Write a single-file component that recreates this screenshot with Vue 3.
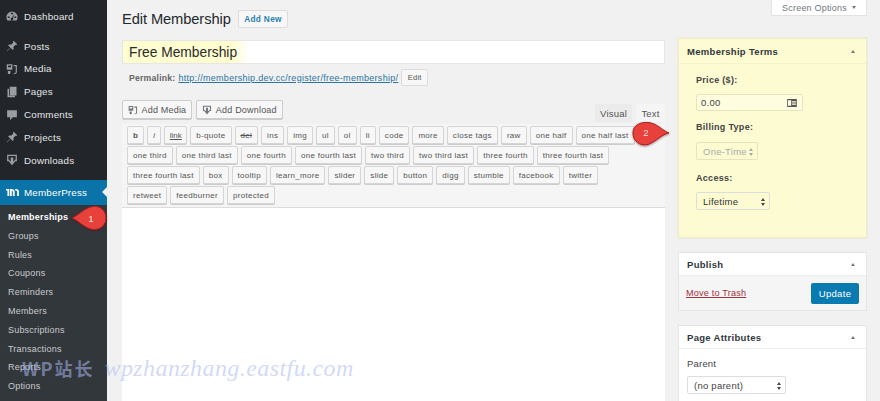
<script setup>
const menu = [
  { label: 'Posts', icon: 'pin' },
  { label: 'Media', icon: 'media' },
  { label: 'Pages', icon: 'pages' },
  { label: 'Comments', icon: 'comment' },
  { label: 'Projects', icon: 'pin' },
  { label: 'Downloads', icon: 'download' }
]
const sub = ['Groups', 'Rules', 'Coupons', 'Reminders', 'Members', 'Subscriptions', 'Transactions', 'Reports', 'Options']
const tags = ['b', 'i', 'link', 'b-quote', 'del', 'ins', 'img', 'ul', 'ol', 'li', 'code', 'more', 'close tags', 'raw', 'one half', 'one half last',
  'one third', 'one third last', 'one fourth', 'one fourth last', 'two third', 'two third last', 'three fourth', 'three fourth last',
  'three fourth last', 'box', 'tooltip', 'learn_more', 'slider', 'slide', 'button', 'digg', 'stumble', 'facebook', 'twitter',
  'retweet', 'feedburner', 'protected']
const breakAfter = new Set([15, 23, 34])
const rows = []
let cur = []
tags.forEach((t, i) => {
  cur.push(t)
  if (breakAfter.has(i)) { rows.push(cur); cur = [] }
})
rows.push(cur)
const tagClass = (t) => ({ bold: t === 'b', ital: t === 'i', und: t === 'link', strike: t === 'del' })
const paths = {
  pin: 'M10.200 1l4.800 4.800-1.300 1-1-.5-2.900 2.900c.7 1.600.3 3.100-.7 4.100L6 10.200 1.500 15l-.5-.5L5.800 10 2.700 6.900c1-1 2.600-1.400 4.200-.7l2.900-2.900-.6-1z',
  media: 'M1 1.500h7.500v7.500H1zM2.700 3.200v2.300h4V3.200zM10 2.500h4.500v9.500c0 1.500-1.200 2.700-2.700 2.700-1 0-1.700-.6-1.700-1.300h1.700c.7 0 1.100-.5 1.100-1.100V4.200H10zM2.500 10.500h3.500v2.500c0 1-.8 1.700-1.800 1.700-.9 0-1.700-.5-1.700-1.200z',
  pages: 'M5 1h9v11.500H5zM2 3.500h2v9.500h8v2H2z',
  comment: 'M1.500 1.500h13v9.500H9L5.500 15v-4h-4z',
  download: 'M1.500 1h13v8.500h-3.300V7.800h1.600V2.800H3.200v5h1.600v1.700H1.500zM6.300 4.500h3.400v5.200H12.500L8 15 3.500 9.700h2.800z'
}
</script>

<template>
  <div class="page">
    <aside class="side">
      <div class="item first">
        <svg class="ico" viewBox="0 0 16 16"><path d="M8 2a7.500 7.500 0 0 0-7.500 7.500c0 1.800.6 3.300 1.500 4.500h12c.9-1.200 1.500-2.700 1.500-4.500A7.500 7.500 0 0 0 8 2zM6.500 3.500h3v2h-3zM2.300 8.500h2.500v2H2.300zM11.200 8.500h2.500v2h-2.500zM11.500 5l-2.200 5.700a1.800 1.800 0 1 1-1.500-.5z" fill="#9a9ea3" fill-rule="evenodd"/></svg>
        <span>Dashboard</span>
      </div>
      <div class="group">
        <div v-for="m in menu" :key="m.label" class="item">
          <svg class="ico" viewBox="0 0 16 16"><path :d="paths[m.icon]" fill="#9a9ea3"/></svg>
          <span>{{ m.label }}</span>
        </div>
      </div>
      <div class="item active">
        <svg class="ico mp" viewBox="0 0 18 12"><path d="M0 1h4.500v10H2V3.300H0zM5.500 1C11 1 12 2.500 12 5.500V11H9.500V5.500C9.500 4 8.800 3.500 8 3.300V11H5.500zM12.500 1c4.500 0 5.500 1.500 5.500 4.500V11h-2.500V5.500c0-1.500-.6-2-1.300-2.200l-1.700-.2z" fill="#fff"/></svg>
        <span>MemberPress</span>
      </div>
      <div class="submenu">
        <div class="sub current">Memberships</div>
        <div v-for="s in sub" :key="s" class="sub">{{ s }}</div>
      </div>
    </aside>

    <main class="main">
      <section class="left">
        <header class="head">
          <h1>Edit Membership</h1>
          <a class="add-new">Add New</a>
        </header>
        <div class="title-box">
          <span class="title-text">Free Membership</span>
        </div>
        <div class="permalink">
          <b>Permalink:</b>
          <a>http://membership.dev.cc/register/free-membership/</a>
          <span class="edit-btn">Edit</span>
        </div>
        <div class="media-row">
          <span class="btn">
            <svg class="bico" viewBox="0 0 16 16"><path :d="paths.media" fill="#72777c"/></svg>Add Media
          </span>
          <span class="btn">
            <svg class="bico" viewBox="0 0 16 16"><path :d="paths.download" fill="#72777c"/></svg>Add Download
          </span>
          <div class="tabs">
            <span class="tab visual">Visual</span>
            <span class="tab text">Text</span>
          </div>
        </div>
        <div class="toolbar">
          <div v-for="(row, r) in rows" :key="r" class="tag-row">
            <span v-for="(t, i) in row" :key="i" class="tag" :class="tagClass(t)">{{ t }}</span>
          </div>
        </div>
        <div class="editor"></div>
      </section>

      <section class="right">
        <div class="screen-opts">Screen Options<i class="down"></i></div>

        <div class="box terms">
          <div class="box-head"><span>Membership Terms</span><i class="up"></i></div>
          <div class="terms-body">
            <label>Price ($):</label>
            <div class="field price">
              <span>0.00</span>
              <svg class="card" viewBox="0 0 12 10"><path d="M0 0h12v10H0zM1 1.500v7h4v-7zM6 2.500v1h5v-1zM6 4.500v1h5v-1zM6 6.500v1h5v-1z" fill="#555" fill-rule="evenodd"/></svg>
            </div>
            <label class="billing">Billing Type:</label>
            <div class="field select disabled">One-Time<i class="spin"></i></div>
            <label class="access">Access:</label>
            <div class="field select life">Lifetime<i class="spin"></i></div>
          </div>
        </div>

        <div class="box publish">
          <div class="box-head"><span>Publish</span><i class="up"></i></div>
          <div class="pub-body">
            <a class="trash">Move to Trash</a>
            <span class="update">Update</span>
          </div>
        </div>

        <div class="box attrs">
          <div class="box-head"><span>Page Attributes</span><i class="up"></i></div>
          <div class="attr-body">
            <div class="parent">Parent</div>
            <div class="field select noparent">(no parent)<i class="spin"></i></div>
          </div>
        </div>
      </section>
    </main>

    <svg class="pin one" viewBox="0 0 37 26">
      <path d="M1 13C8 10 13 3 22 1.500c7-1 13 4 13 11.500s-6 12-13 11.500C13 23 8 16 1 13z" fill="#e8413c" stroke="#a81e22" stroke-width="1"/>
      <text x="20" y="17" class="pin-num">1</text>
    </svg>
    <svg class="pin two" viewBox="0 0 38 26">
      <path d="M37 12C30 13 25 20 16 23.500 8 25.500 1 20 1 12S8 1 16 1.500c9 .5 14 8 21 10.500z" fill="#e8413c" stroke="#a81e22" stroke-width="1"/>
      <text x="14" y="15" class="pin-num">2</text>
    </svg>
    <div class="watermark"><span class="wm-cn">WP站长</span><span class="wm-en">wpzhanzhang.eastfu.com</span></div>
  </div>
</template>

<style>
html, body { margin: 0; background: #f1f1f1; }
</style>

<style scoped>
.page {
  position: relative;
  display: flex;
  width: 880px;
  height: 401px;
  overflow: hidden;
  background: #f1f1f1;
  font-family: "Liberation Sans", Arial, sans-serif;
  color: #444;
}
.side { width: 107px; flex: none; background: #22262a; color: #e4e5e6; font-size: 9.800px; letter-spacing: .2px; }
.item { display: flex; align-items: center; height: 22.800px; padding-left: 6px; gap: 6px; }
.item.first { margin-top: 5px; }
.group { margin-top: 7px; }
.ico { width: 12px; height: 12px; flex: none; }
.item.active {
  position: relative;
  margin-top: 8.400px;
  height: 25px;
  gap: 5px;
  background: #0a74a8;
  color: #fff;
  font-size: 9.800px;
}
.item.active::after {
  content: "";
  position: absolute;
  right: 0;
  top: 7px;
  border: 5px solid transparent;
  border-right-color: #f1f1f1;
  border-left-width: 0;
}
.ico.mp { width: 13px; height: 9px; }
.submenu { background: #32373c; padding-top: 3px; height: 220px; }
.sub { height: 18.800px; line-height: 18.800px; padding-left: 8px; font-size: 9px; color: #c8cacc; letter-spacing: .2px; }
.sub.current { color: #fff; font-weight: 700; }

.main { flex: 1; display: flex; gap: 13px; padding: 0 13px 0 15px; min-width: 0; }
.left { width: 543px; flex: none; display: flex; flex-direction: column; }
.head { display: flex; align-items: center; height: 28px; margin-top: 5px; gap: 7px; flex: none; }
h1 { margin: 0; font-size: 14.700px; font-weight: 400; color: #23282d; letter-spacing: -.1px; }
.add-new {
  display: flex; align-items: center; height: 16px; padding: 0 5.500px;
  border: 1px solid #ddd; background: #f7f7f7; border-radius: 2px;
  color: #2a7fae; font-size: 8.300px; font-weight: 700; letter-spacing: .3px;
}
.title-box {
  display: flex; align-items: center; height: 24px; margin-top: 7px; flex: none;
  background: linear-gradient(90deg, #fdfdd0 0, #fdfdd0 110px, #ffffff 126px);
  border: 1px solid #e6e6e6; box-sizing: border-box; padding-left: 6px;
}
.title-text { font-size: 13.800px; color: #2b2b2b; }
.permalink { display: flex; align-items: center; height: 17px; margin-top: 5px; padding-left: 7px; font-size: 9px; color: #666; letter-spacing: .2px; flex: none; }
.permalink b { font-size: 8.700px; }
.permalink a { margin-left: 3px; color: #2a75a3; text-decoration: underline; letter-spacing: .29px; }
.edit-btn {
  margin-left: 3px; height: 15px; line-height: 15px; padding: 0 5.500px;
  border: 1px solid #ddd; border-radius: 2px; background: #f7f7f7; font-size: 7.500px; color: #555;
}
.media-row { display: flex; align-items: flex-start; margin-top: 14px; height: 24px; gap: 4px; flex: none; }
.btn {
  display: flex; align-items: center; gap: 3.500px; height: 17px; padding: 0 5px;
  border: 1px solid #ccc; border-radius: 2px; background: #f7f7f7; white-space: nowrap;
  font-size: 9px; color: #555; letter-spacing: .2px; box-shadow: 0 1px 0 #ccc;
}
.bico { width: 10px; height: 10px; }
.tabs { margin-left: auto; display: flex; gap: 4px; padding-top: 4px; }
.tab { display: flex; align-items: center; justify-content: center; height: 18px; font-size: 9.500px; color: #555; letter-spacing: .2px; }
.tab.visual { width: 37px; background: #ebebeb; }
.tab.text { width: 29px; background: #f5f5f5; }
.toolbar {
  height: 84px; box-sizing: border-box; padding: 2px 0 0 5px; background: #f5f5f5; flex: none;
  border-bottom: 1px solid #ddd;
  display: flex; flex-direction: column; gap: 2px;
}
.tag-row { display: flex; gap: 3px; height: 18px; }
.tag {
  display: flex; align-items: center; height: 16px; padding: 0 5px;
  border: 1px solid #d5d5d5; border-radius: 2px; background: #f7f7f7; white-space: nowrap;
  font-size: 8px; color: #555; letter-spacing: .3px; box-shadow: 0 1px 0 #ccc;
}
.tag.bold { font-weight: 700; }
.tag.ital { font-style: italic; }
.tag.und { text-decoration: underline; letter-spacing: 0; padding: 0 4.500px; }
.tag.strike { text-decoration: line-through; }
.editor { flex: 1; background: #fff; }

.right { width: 189px; flex: none; display: flex; flex-direction: column; }
.screen-opts {
  align-self: flex-end; width: 96px; height: 16px; box-sizing: border-box; flex: none;
  display: flex; align-items: center; justify-content: center; gap: 5px;
  background: #fff; border: 1px solid #e2e2e2; border-top: 0;
  font-size: 9px; color: #72777c; letter-spacing: .2px;
}
.down { border: 2.500px solid transparent; border-top: 3px solid #72777c; border-bottom: 0; }
.up { border: 2.500px solid transparent; border-bottom: 3px solid #72777c; border-top: 0; }
.box { background: #fff; border: 1px solid #e5e5e5; box-sizing: border-box; flex: none; }
.box-head {
  display: flex; align-items: center; justify-content: space-between; height: 23px; box-sizing: border-box;
  padding: 0 11px 0 8px; border-bottom: 1px solid #eee;
  font-size: 9.500px; font-weight: 700; color: #32373c; letter-spacing: .3px;
}
.terms {
  margin-top: 22px; height: 200px; background: #fdfbd2; border: 1px solid #efeccb;
  box-shadow: 0 0 2px #e8e5c0;
}
.terms .box-head { height: 25px; border-bottom-color: #f4f1cb; }
.terms-body { padding: 10px 0 0 17px; display: flex; flex-direction: column; align-items: flex-start; }
.terms-body label { font-size: 9px; font-weight: 700; color: #444; letter-spacing: .3px; height: 12px; line-height: 12px; }
.field {
  box-sizing: border-box; display: flex; align-items: center; font-size: 9.500px;
  border: 1px solid #e7e4bc; border-radius: 2px; color: #444; letter-spacing: .25px;
}
.price { width: 107px; height: 17px; margin-top: 8px; padding: 0 3px 0 4px; justify-content: space-between; background: #fffde0; }
.card { width: 10px; height: 8px; margin-right: 2px; }
.billing { margin-top: 10px; }
.select { position: relative; padding-left: 6px; height: 18px; background: #fdfbd2; }
.disabled { width: 62px; margin-top: 9px; color: #aaa; }
.access { margin-top: 12px; }
.life { width: 74px; margin-top: 8px; border-color: #ddd; color: #333; }
.spin { position: absolute; right: 3px; top: 4.500px; width: 5px; height: 8px; }
.spin::before, .spin::after { content: ""; position: absolute; left: 0; border: 2.500px solid transparent; }
.spin::before { top: 0; border-bottom: 3px solid #444; border-top: 0; }
.spin::after { bottom: 0; border-top: 3px solid #444; border-bottom: 0; }
.disabled .spin::before { border-bottom-color: #aaa; }
.disabled .spin::after { border-top-color: #aaa; }
.publish { margin-top: 14px; height: 59px; }
.pub-body { display: flex; align-items: center; justify-content: space-between; height: 34px; padding: 0 7px; background: #f5f5f5; }
.trash { color: #a0333f; text-decoration: underline; font-size: 9.100px; letter-spacing: .2px; }
.update {
  display: flex; align-items: center; justify-content: center; width: 48px; height: 21px;
  background: #0a7bb0; border-radius: 2px; color: #fff; font-size: 9.500px; letter-spacing: .3px;
}
.attrs { margin-top: 14px; height: 100px; }
.attr-body { padding: 9px 8px; }
.parent { font-size: 9.500px; color: #444; letter-spacing: .2px; }
.noparent { width: 99px; height: 18px; margin-top: 7px; background: #fff; border-color: #ddd; }

.pin { position: absolute; overflow: visible; filter: drop-shadow(0 1px 1px rgba(90, 20, 20, .5)); }
.pin.one { left: 71px; top: 205px; width: 37px; height: 26px; }
.pin.two { left: 632px; top: 121px; width: 38px; height: 26px; }
.pin-num { fill: #f7e3df; font-size: 9.500px; font-family: "Liberation Sans", Arial, sans-serif; text-anchor: middle; }
.watermark {
  position: absolute; left: 22px; top: 355px; display: flex; align-items: baseline; gap: 10px;
  color: rgba(170, 185, 240, .55); font-family: "Liberation Serif", serif; font-style: italic; font-size: 24px;
  letter-spacing: .42px;
}
.wm-cn { font-size: 18px; font-family: "Noto Sans CJK SC", sans-serif; font-style: normal; letter-spacing: 2px; font-weight: 700; }
</style>
